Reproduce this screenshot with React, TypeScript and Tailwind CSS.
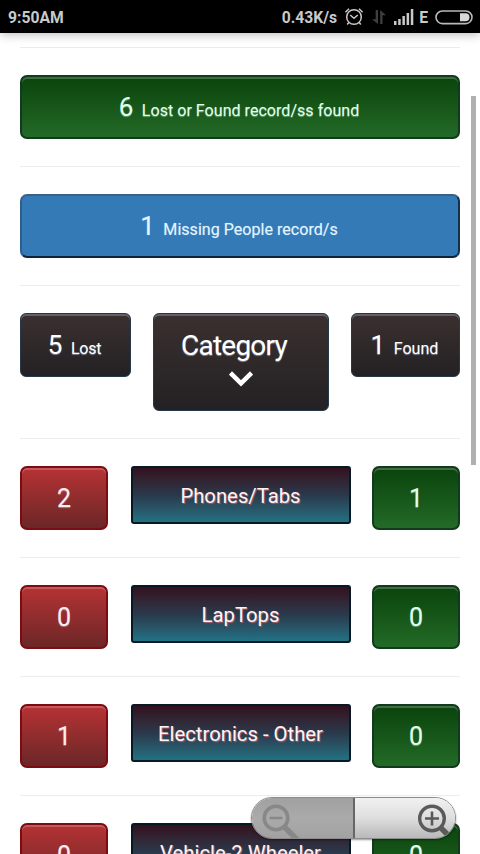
import type { ReactNode } from "react";

const green =
  "rounded-[7px] border-2 border-[#123a1c] bg-gradient-to-b from-[#0a440c] to-[#236a27] text-[#e2ffec] shadow-[inset_0_2px_0_rgba(255,255,255,0.22)] [text-shadow:0_1px_1px_rgba(190,255,215,0.45)]";
const red =
  "rounded-[7px] border-2 border-[#7c0c12] bg-gradient-to-b from-[#b63234] to-[#6c2627] text-[#fdecee] shadow-[inset_0_2px_0_rgba(255,255,255,0.2)] [text-shadow:0_1px_1px_rgba(255,215,220,0.45)]";
const dark =
  "rounded-[6px] border border-[#26394a] bg-gradient-to-b from-[#3b302f] to-[#232124] text-white shadow-[inset_0_2px_0_rgba(130,145,165,0.5)] [text-shadow:0_1px_1px_rgba(210,225,255,0.5)]";
const blue =
  "rounded-[7px] border-2 border-t-[#3a6287] border-l-[#2c5f8d] border-r-[#12314e] border-b-[#0c243a] bg-[#337ab7] text-[#e1f5ff] [text-shadow:0_0_1px_rgba(225,245,255,0.45)]";

function Rule() {
  return <div className="h-px w-full shrink-0 bg-[#ececec]" />;
}

function Section({ children }: { children: ReactNode }) {
  return (
    <>
      <div className="flex shrink-0 items-start justify-between py-[27px]">{children}</div>
      <Rule />
    </>
  );
}

function Summary({ count, label, className }: { count: string; label: string; className: string }) {
  return (
    <div className={`flex h-16 items-baseline justify-center whitespace-pre pr-[2px] ${className}`}>
      <span className="text-[26px] leading-9 tracking-[-0.5px]">{count}</span>
      <span className="ml-[9px] text-[16.1px] leading-9">{label}</span>
    </div>
  );
}

function CategoryRow({ lost, name, found }: { lost: string; name: string; found: string }) {
  return (
    <Section>
      <div className={`flex h-16 w-[88px] items-center justify-center pt-[2px] text-[25px] ${red}`}>{lost}</div>
      <div className="ml-px flex h-[58px] w-[220px] items-center justify-center whitespace-nowrap rounded-[3px] border-2 border-[#071925] bg-gradient-to-b from-[#32101f] via-[#29394b] to-[#1e7284] pt-[2px] text-[20.3px] text-[#fff4f4] [text-shadow:1px_1px_1px_#b8606c]">
        {name}
      </div>
      <div className={`flex h-16 w-[88px] items-center justify-center pt-[2px] text-[25px] ${green}`}>{found}</div>
    </Section>
  );
}

function StatusBar() {
  return (
    <header className="relative z-10 flex h-[33px] shrink-0 items-center bg-black pl-2 pr-[7px] pt-px text-[15.7px] font-bold text-[#c9c9c9] shadow-[0_1px_10px_rgba(0,0,0,0.3)]">
      <span className="pt-px">9:50AM</span>
      <span className="ml-auto pt-px">0.43K/s</span>
      <svg className="ml-[7px]" width="20" height="20" viewBox="0 0 20 20" fill="none" stroke="#c9c9c9" strokeWidth="1.5">
        <circle cx="10" cy="10" r="7.3" />
        <path d="M6.2 8 10 11.2 13.8 8M1.4 5.2 5 1.8M18.6 5.2 15 1.8M4.8 15.5 3.2 17.4M15.2 15.5l1.6 1.9" />
      </svg>
      <svg className="ml-[7px]" width="16" height="16" viewBox="0 0 16 16" fill="#3f3f3f">
        <path d="M4.7 1H7v14L1 10.3h3.7zM9.2 15V1l5.8 5.2h-3.5V15z" />
      </svg>
      <svg className="ml-[7px]" width="20" height="16" viewBox="0 0 20 16" fill="#c9c9c9">
        <path d="M0 12h2.5v4H0zM4.2 10h2.5v6H4.2zM8.4 7h2.5v9H8.4zM12.6 4h2.5v12h-2.5zM16.8 0h2.5v16h-2.5z" />
      </svg>
      <span className="ml-[5px] pt-px">E</span>
      <svg className="ml-[7px]" width="38" height="15" viewBox="0 0 38 15">
        <rect x="1" y="1" width="36" height="12.6" rx="6.3" fill="none" stroke="#b9b9b9" strokeWidth="1.6" />
        <path d="M25 3.3h5.5a4 4 0 0 1 0 8H25z" fill="#d9d9d9" />
      </svg>
    </header>
  );
}

function ZoomControls() {
  return (
    <div className="absolute left-[251px] top-[797px] z-20 flex h-[42px] w-[205px] overflow-hidden rounded-full border border-[#8d8d8d] shadow-[0_1px_2px_rgba(0,0,0,0.4)]">
      <div className="w-[103px] border-r-2 border-[#666] bg-gradient-to-b from-[#a0a0a0] via-[#aaa] to-[#a2a2a2]">
        <svg className="ml-[9px] mt-[5px]" width="40" height="38" viewBox="0 0 40 38" fill="none" stroke="#888">
          <circle cx="15" cy="15" r="11.8" strokeWidth="3.6" />
          <path d="m23.5 24 13 13" strokeWidth="5.5" />
          <path d="M8.5 15h13" strokeWidth="2.6" />
        </svg>
      </div>
      <div className="flex-1 bg-gradient-to-b from-[#f1f1f1] via-[#dedede] to-[#b9b9b9]">
        <svg className="ml-[62px] mt-[5px]" width="38" height="38" viewBox="0 0 38 38" fill="none" stroke="#5a5a5a">
          <circle cx="15" cy="15.5" r="12.3" strokeWidth="3.4" />
          <path d="m23.5 24.5 7.5 7.5" strokeWidth="5.5" />
          <path d="M8 15.5h14M15 8.5v14" strokeWidth="2.6" />
        </svg>
      </div>
    </div>
  );
}

export default function App() {
  return (
    <div className="relative flex h-[854px] w-[480px] flex-col overflow-hidden bg-white font-['Roboto','Noto_Sans',sans-serif]">
      <StatusBar />
      <main className="flex min-h-0 flex-1 flex-col overflow-hidden px-5 pt-[14px]">
        <Rule />
        <Section>
          <Summary count="6" label="Lost or Found record/ss found" className={`w-full pt-3 ${green}`} />
        </Section>
        <Section>
          <Summary count="1" label="Missing People record/s" className={`w-full pt-3 ${blue}`} />
        </Section>
        <Section>
          <Summary count="5" label="Lost" className={`w-[111px] pt-[13px] tracking-[-0.3px] ${dark}`} />
          <div className={`mr-px flex h-[98px] w-[176px] flex-col items-center ${dark}`}>
            <span className="mr-[13px] mt-[14px] text-[28px] leading-9 tracking-[-0.75px]">Category</span>
            <svg className="mt-[7px]" width="24" height="17" viewBox="0 0 24 17" fill="none" stroke="#fff" strokeWidth="4.6">
              <path d="m1.4 2 10.6 10.4L22.6 2" />
            </svg>
          </div>
          <Summary count="1" label="Found" className={`w-[109px] pt-[13px] ${dark}`} />
        </Section>
        <CategoryRow lost="2" name="Phones/Tabs" found="1" />
        <CategoryRow lost="0" name="LapTops" found="0" />
        <CategoryRow lost="1" name="Electronics - Other" found="0" />
        <CategoryRow lost="0" name="Vehicle-2 Wheeler" found="0" />
      </main>
      <div className="absolute left-[471px] top-[96px] h-[369px] w-[5px] bg-[#b0b0b0]" />
      <ZoomControls />
    </div>
  );
}
